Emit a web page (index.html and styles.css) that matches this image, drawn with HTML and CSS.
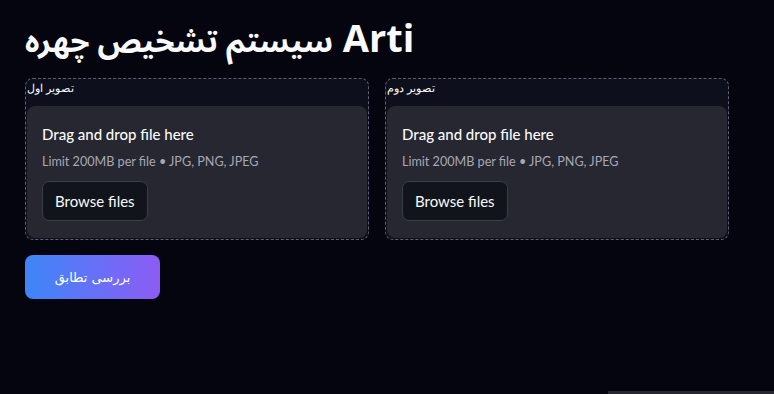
FILE: index.html
```html
<!DOCTYPE html>
<html lang="fa">
<head>
<meta charset="utf-8">
<link rel="stylesheet" href="styles.css">
</head>
<body>
<main class="page">
  <h1 class="title" dir="ltr"><span class="title-fa">سیستم تشخیص چهره</span> Arti</h1>
  <div class="uploads">
    <section class="card">
      <div class="label">تصویر اول</div>
      <div class="drop">
        <div class="drop-title">Drag and drop file here</div>
        <div class="drop-sub">Limit 200MB per file • JPG, PNG, JPEG</div>
        <button class="browse">Browse files</button>
      </div>
    </section>
    <section class="card">
      <div class="label">تصویر دوم</div>
      <div class="drop">
        <div class="drop-title">Drag and drop file here</div>
        <div class="drop-sub">Limit 200MB per file • JPG, PNG, JPEG</div>
        <button class="browse">Browse files</button>
      </div>
    </section>
  </div>
  <button class="compare">بررسی تطابق</button>
</main>
<div class="corner"></div>
</body>
</html>
```
FILE: styles.css
```css
html, body {
  margin: 0;
  padding: 0;
  background: #04050e;
  height: 100%;
  overflow: hidden;
}
body {
  font-family: "Lato", "DejaVu Sans", sans-serif;
  color: #fafafa;
  position: relative;
}
.page {
  padding: 12px 0 0 25px;
  display: flex;
  flex-direction: column;
  align-items: flex-start;
}
.title {
  margin: 0;
  font-family: "Open Sans", "DejaVu Sans", sans-serif;
  font-weight: 700;
  font-size: 38px;
  line-height: 50px;
  height: 54px;
  white-space: nowrap;
}
.title-fa {
  font-family: "Noto Sans Arabic", "Noto Naskh Arabic", "DejaVu Sans", sans-serif;
  font-size: 31px;
}
.uploads {
  margin-top: 12px;
  display: flex;
  gap: 16px;
}
.card {
  width: 340px;
  height: 159px;
  border: 1px dashed #5c6070;
  border-radius: 8px;
  background: #0e0f1d;
  display: flex;
  flex-direction: column;
  padding: 0 1px 1px 1px;
  box-sizing: content-box;
}
.label {
  font-family: "DejaVu Serif", "Liberation Serif", serif;
  font-size: 11px;
  line-height: 14px;
  height: 27px;
  padding-top: 3px;
  box-sizing: border-box;
  text-align: left;
  color: #ffffff;
}
.drop {
  flex: 1;
  background: #262730;
  border-radius: 8px;
  padding: 18px 15px 0 15px;
  display: flex;
  flex-direction: column;
  align-items: flex-start;
  box-sizing: border-box;
}
.drop-title {
  font-size: 15px;
  line-height: 20px;
  font-weight: 500;
  color: #fafafa;
}
.drop-sub {
  margin-top: 10px;
  font-size: 12.6px;
  line-height: 16px;
  color: #a6a9b3;
}
.browse {
  margin-top: 11px;
  height: 40px;
  padding: 0 12px;
  background: #12141b;
  border: 1px solid #3b3d48;
  border-radius: 7px;
  color: #fafafa;
  font-family: "Lato", sans-serif;
  font-size: 15px;
}
.compare {
  margin-top: 15px;
  width: 135px;
  height: 44px;
  border: none;
  border-radius: 8px;
  background: linear-gradient(90deg, #3d86f8, #8d5cf5);
  color: #ffffff;
  font-family: "DejaVu Sans", sans-serif;
  font-size: 13px;
}
.corner {
  position: absolute;
  right: 0;
  bottom: 0;
  width: 166px;
  height: 3px;
  background: #262730;
}
```
